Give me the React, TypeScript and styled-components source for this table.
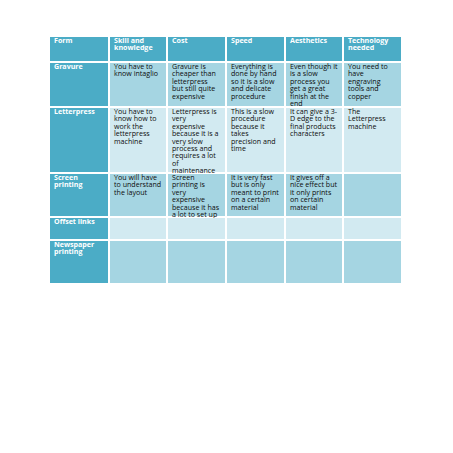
import React from 'react';
import styled, { createGlobalStyle } from 'styled-components';

const GlobalStyle = createGlobalStyle`
  body {
    margin: 0;
    background: #ffffff;
    font-family: "Open Sans", Lato, sans-serif;
  }
`;

// line breaks follow the original document's wrapping
const headers = [
  'Form',
  'Skill and\nknowledge',
  'Cost',
  'Speed',
  'Aesthetics',
  'Technology\nneeded',
];

const rows: string[][] = [
  [
    'Gravure',
    'You have to\nknow intaglio',
    'Gravure is\ncheaper than\nletterpress\nbut still quite\nexpensive',
    'Everything is\ndone by hand\nso it is a slow\nand delicate\nprocedure',
    'Even though it\nis a slow\nprocess you\nget a great\nfinish at the\nend',
    'You need to\nhave\nengraving\ntools and\ncopper',
  ],
  [
    'Letterpress',
    'You have to\nknow how to\nwork the\nletterpress\nmachine',
    'Letterpress is\nvery\nexpensive\nbecause it is a\nvery slow\nprocess and\nrequires a lot\nof\nmaintenance',
    'This is a slow\nprocedure\nbecause it\ntakes\nprecision and\ntime',
    'It can give a 3-\nD edge to the\nfinal products\ncharacters',
    'The\nLetterpress\nmachine',
  ],
  [
    'Screen\nprinting',
    'You will have\nto understand\nthe layout',
    'Screen\nprinting is\nvery\nexpensive\nbecause it has\na lot to set up',
    'It is very fast\nbut is only\nmeant to print\non a certain\nmaterial',
    'It gives off a\nnice effect but\nit only prints\non certain\nmaterial',
    '',
  ],
  ['Offset links', '', '', '', '', ''],
  ['Newspaper\nprinting', '', '', '', '', ''],
];

const Page = styled.div`
  padding: 37px 0 0 50px;
`;

const Table = styled.div`
  display: grid;
  grid-template-columns: 58px 56px 57px 57px 56px 57px;
  grid-template-rows: 24px 43px 64px 42px 21px 42px;
  gap: 2px;
  width: 351px;
  background: #ffffff;
`;

const Cell = styled.div<{ $tone: 'head' | 'odd' | 'even' }>`
  padding: 0 2px 0 4px;
  font-size: 7.1px;
  line-height: 7.4px;
  white-space: pre;
  color: ${(p) => (p.$tone === 'head' ? '#ffffff' : '#0c0c0c')};
  font-weight: ${(p) => (p.$tone === 'head' ? 700 : 500)};
  background: ${(p) =>
    p.$tone === 'head' ? '#4bacc6' : p.$tone === 'odd' ? '#a5d5e2' : '#d2eaf1'};
`;

export default function App() {
  return (
    <Page>
      <GlobalStyle />
      <Table>
        {headers.map((h) => (
          <Cell key={h} $tone="head">
            {h}
          </Cell>
        ))}
        {rows.map((row, i) =>
          row.map((text, j) => (
            <Cell
              key={`${i}-${j}`}
              $tone={j === 0 ? 'head' : i % 2 === 0 ? 'odd' : 'even'}
            >
              {text}
            </Cell>
          ))
        )}
      </Table>
    </Page>
  );
}
